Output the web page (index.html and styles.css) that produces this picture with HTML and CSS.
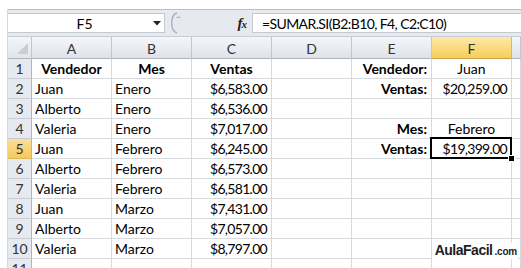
FILE: index.html
```html
<!DOCTYPE html>
<html lang="es">
<head>
<meta charset="utf-8">
<title>SUMAR.SI</title>
<link rel="stylesheet" href="styles.css">
</head>
<body>
<div class="app">
  <div class="fbar">
    <div class="namebox">
      <span class="ref">F5</span>
      <svg class="arrow" width="8" height="5" viewBox="0 0 8 5"><polygon points="0,0 8,0 4,4.5" fill="#222"/></svg>
    </div>
    <div class="fxzone">
      <svg class="grip" width="14" height="22" viewBox="0 0 14 22"><path d="M9 1 C2 3, 2 19, 9 21" fill="none" stroke="#a8aeb6" stroke-width="1.4"/><path d="M8 6 C9 4, 12 4, 13 6 Z" fill="#b5bbc3"/></svg>
      <span class="fx">f<span class="fxs">x</span></span>
    </div>
    <div class="formula">=SUMAR.SI(B2:B10, F4, C2:C10)</div>
  </div>
  <div class="sheet">
    <div class="corner"><svg width="11" height="11" viewBox="0 0 11 11"><polygon points="11,0 11,11 0,11" fill="#c9ced5"/></svg></div>
    <div class="ch">A</div><div class="ch">B</div><div class="ch">C</div><div class="ch">D</div><div class="ch">E</div><div class="ch hl">F</div><div class="ch"></div>

    <div class="rh">1</div><div class="c b m">Vendedor</div><div class="c b m">Mes</div><div class="c b m">Ventas</div><div class="c"></div><div class="c b r">Vendedor:</div><div class="c m">Juan</div><div class="c"></div>
    <div class="rh">2</div><div class="c">Juan</div><div class="c">Enero</div><div class="c r n">$6,583.00</div><div class="c"></div><div class="c b r">Ventas:</div><div class="c r n">$20,259.00</div><div class="c"></div>
    <div class="rh">3</div><div class="c">Alberto</div><div class="c">Enero</div><div class="c r n">$6,536.00</div><div class="c"></div><div class="c"></div><div class="c"></div><div class="c"></div>
    <div class="rh">4</div><div class="c">Valeria</div><div class="c">Enero</div><div class="c r n">$7,017.00</div><div class="c"></div><div class="c b r">Mes:</div><div class="c m">Febrero</div><div class="c"></div>
    <div class="rh hl">5</div><div class="c">Juan</div><div class="c">Febrero</div><div class="c r n">$6,245.00</div><div class="c"></div><div class="c b r">Ventas:</div><div class="c r n sel">$19,399.00</div><div class="c"></div>
    <div class="rh">6</div><div class="c">Alberto</div><div class="c">Febrero</div><div class="c r n">$6,573.00</div><div class="c"></div><div class="c"></div><div class="c"></div><div class="c"></div>
    <div class="rh">7</div><div class="c">Valeria</div><div class="c">Febrero</div><div class="c r n">$6,581.00</div><div class="c"></div><div class="c"></div><div class="c"></div><div class="c"></div>
    <div class="rh">8</div><div class="c">Juan</div><div class="c">Marzo</div><div class="c r n">$7,431.00</div><div class="c"></div><div class="c"></div><div class="c"></div><div class="c"></div>
    <div class="rh">9</div><div class="c">Alberto</div><div class="c">Marzo</div><div class="c r n">$7,057.00</div><div class="c"></div><div class="c"></div><div class="c"></div><div class="c"></div>
    <div class="rh">10</div><div class="c">Valeria</div><div class="c">Marzo</div><div class="c r n">$8,797.00</div><div class="c"></div><div class="c"></div><div class="c"></div><div class="c"></div>
    <div class="rh">11</div><div class="c"></div><div class="c"></div><div class="c"></div><div class="c"></div><div class="c"></div><div class="c"></div><div class="c"></div>
  </div>
  <div class="logo">AulaFacil<span class="dom">.com</span></div>
</div>
</body>
</html>
```
FILE: styles.css
```css
html, body {
  margin: 0;
  padding: 0;
  background: #fff;
  overflow: hidden;
}
body {
  font-family: Lato, "Liberation Sans", sans-serif;
  font-size: 14px;
  color: #000;
}
.app {
  position: relative;
  margin: 9px 0 0 7px;
  border-left: 1px solid #d6dae0;
  height: 259px;
  overflow: hidden;
}
.fbar {
  display: flex;
  box-sizing: border-box;
  height: 28px;
  padding: 3px 0;
  background: #e6e9ee;
  border-top: 1px solid #b9bfc8;
  border-bottom: 1px solid #c9ced5;
}
.namebox {
  width: 157px;
  display: flex;
  align-items: center;
  background: #fff;
  border: 1px solid #c3c9d1;
  border-left: none;
  box-sizing: border-box;
}
.ref {
  flex: 1;
  text-align: center;
  padding-left: 8px;
  font-size: 14px;
}
.arrow {
  margin-right: 3px;
}
.fxzone {
  width: 87px;
  display: flex;
  align-items: center;
  justify-content: space-between;
  padding: 0 6px 0 3px;
  box-sizing: border-box;
}
.fx {
  font-family: "Liberation Serif", serif;
  font-style: italic;
  font-weight: bold;
  font-size: 15px;
  color: #222;
  letter-spacing: -1px;
}
.fxs {
  font-size: 11px;
}
.formula {
  flex: 1;
  background: #fff;
  border: 1px solid #c3c9d1;
  border-right: none;
  padding-left: 9px;
  line-height: 19px;
  white-space: nowrap;
  letter-spacing: -0.6px;
}
.sheet {
  display: grid;
  grid-template-columns: 24px repeat(6, 80px) 9px;
  grid-template-rows: 22px repeat(11, 20px);
}
.corner, .ch, .rh {
  box-sizing: border-box;
  color: #333;
  display: flex;
  align-items: center;
  justify-content: center;
}
.corner {
  background: linear-gradient(#f3f5f8, #e1e5ea);
  border-right: 1px solid #c2c7ce;
  border-bottom: 1px solid #aeb5be;
  align-items: flex-end;
  justify-content: flex-end;
  padding: 0 3px 4px 0;
}
.ch {
  background: linear-gradient(#f4f6f9, #dfe3e9);
  border-right: 1px solid #c2c7ce;
  border-bottom: 1px solid #aeb5be;
  padding-top: 1px;
}
.rh {
  background: #e6eaf0;
  border-right: 1px solid #aeb5be;
  border-bottom: 1px solid #c8cdd4;
}
.ch.hl {
  background: linear-gradient(#fde9a6, #f6cd58);
  border-right-color: #d9b860;
  border-bottom-color: #c8a24a;
}
.rh.hl {
  background: linear-gradient(#fbe09a, #f5c85a);
  border-bottom-color: #d9b860;
}
.c {
  box-sizing: border-box;
  border-right: 1px solid #d6d9dd;
  border-bottom: 1px solid #d6d9dd;
  padding: 0 3px;
  line-height: 19px;
  white-space: nowrap;
}
.b { font-weight: bold; }
.r { text-align: right; padding-right: 4px; }
.m { text-align: center; }
.n { letter-spacing: -0.7px; }
.sel {
  position: relative;
}
.sel::after {
  content: "";
  position: absolute;
  left: -2px;
  top: -2px;
  right: -1px;
  bottom: -1px;
  border: 2px solid #000;
}
.sel::before {
  content: "";
  position: absolute;
  right: -4px;
  bottom: -4px;
  width: 5px;
  height: 5px;
  background: #000;
  border: 1px solid #fff;
  z-index: 2;
}
.logo {
  position: absolute;
  right: 3px;
  bottom: 9px;
  background: #fff;
  padding: 1px 1px 1px 3px;
  font-family: "Liberation Sans", Arial, sans-serif;
  font-weight: bold;
  font-size: 14px;
  line-height: 13px;
  letter-spacing: -0.5px;
  color: #1e1e1e;
}
.dom {
  font-size: 10px;
  margin-left: 2px;
  letter-spacing: -0.2px;
}
```
